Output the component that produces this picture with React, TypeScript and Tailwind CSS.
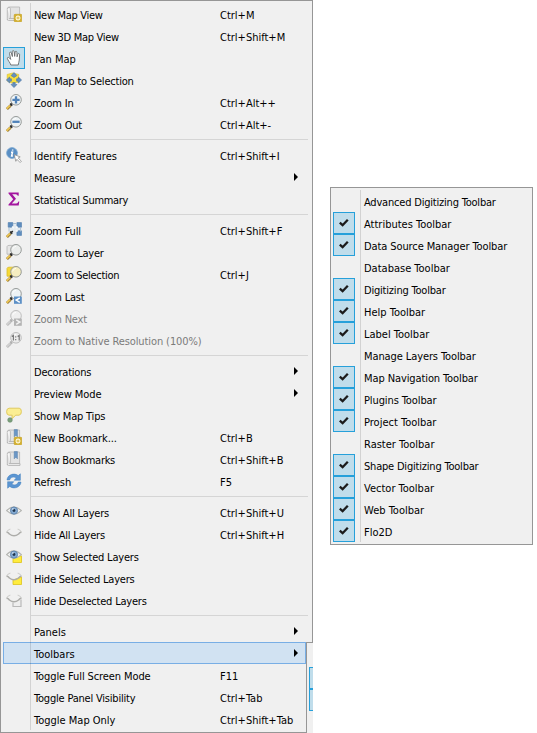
import React from "react";

type Item = { label: string; keys?: string; icon?: string; sub?: boolean; off?: boolean; active?: boolean; t?: string };

const T0 = "tracking-normal";
const T1 = "tracking-[-0.1px]";
const T2 = "tracking-[-0.2px]";
const T3 = "tracking-[-0.3px]";

const Lens = ({ fill = "#edf2f4", gray = false }: { fill?: string; gray?: boolean }) => (
  <g>
    <path d="M4.6 11.4 .9 15.1" stroke={gray ? "#bdbdbd" : "#a3853f"} strokeWidth="2.8" />
    <path d="M4 11.4 .7 14.7" stroke={gray ? "#d2d2d2" : "#f3cb52"} strokeWidth="1.4" />
    <path d="M6.6 9.2 4.4 11.4M4.2 9.6l2 2.2" stroke={gray ? "#b0b0b0" : "#2b2b2b"} strokeWidth="1.5" />
    <circle cx="10" cy="5.8" r="5.3" fill={fill} stroke={gray ? "#bdbdbd" : "#969a98"} strokeWidth="1" />
    <path d="M6.6 5.4Q7.200 2.600 10 2.300" fill="none" stroke="#fff" strokeOpacity=".8" strokeWidth="1" />
  </g>
);

const Page = ({ mark = false }: { mark?: boolean }) => (
  <g>
    <path d="M3.4 1h10.200v11.600H4.800L1.300 14V2.600Q1.600 1 3.400 1Z" fill="#e3e3e3" stroke="#b9b9b9" strokeWidth=".9" />
    <path d="M1.500 3Q1.700 1.300 3 1.300 4.400 1.300 4.400 3v9.700" fill="#f6f6f6" stroke="#b4b4b4" strokeWidth=".8" />
    <path d="M2.800 12.600H14v1.800H2.600Q1.400 14.200 1.400 13" fill="#f6f6f6" stroke="#b0b0b0" strokeWidth=".9" />
    {mark && <path d="M8.200.6h3.200v7.200L9.800 6.200 8.200 7.800Z" fill="#6b97c6" stroke="#4f7aa8" strokeWidth=".5" />}
  </g>
);

const Star = () => (
  <g>
    <rect x="8.200" y="8.300" width="7.500" height="7.400" rx=".8" fill="#d5b02e" stroke="#c39f1d" strokeWidth=".6" />
    <path d="M12 9.300v5.400M9.300 12h5.400M10.200 10.200l3.600 3.600M13.800 10.200l-3.600 3.600" stroke="#fffbe0" strokeWidth="1.100" />
    <circle cx="12" cy="12" r=".9" fill="#d5b02e" />
  </g>
);

const Eye = () => (
  <g>
    <path d="M.6 6.600Q7.600-.6 15.400 6.600 8 13.600.6 6.600Z" fill="#f6f6f4" stroke="#b4b5b2" strokeWidth="1.200" />
    <circle cx="8" cy="6.600" r="3.600" fill="#84aad2" stroke="#5c82ab" strokeWidth=".9" />
    <circle cx="8" cy="6.500" r="1.400" fill="#1e344d" />
    <circle cx="6.900" cy="5" r=".8" fill="#e7f1fa" />
  </g>
);

const Lid = () => (
  <g fill="none">
    <path d="M.8 5.800Q1.800 3.700 4.400 3M15.200 5.800Q14.200 3.700 11.600 3" stroke="#cfcfcd" strokeWidth="1.100" />
    <path d="M.5 6.200Q2.200 6.200 3.400 8 8 11.600 12.600 8 13.800 6.200 15.500 6.200" stroke="#adadaa" strokeWidth="1.500" />
  </g>
);

const glyphs: Record<string, React.ReactNode> = {
  newMap: <><Page /><Star /></>,
  hand: (
    <path d="M4.800 15C4.300 12.800 1.700 10.300 1.400 8.500 1.200 7.200 2.500 7 3.300 7.900L4.700 9.400 3.500 3.400C3.300 1.900 4.900 1.600 5.300 2.900L6.400 6.500 6.200 1.700C6.300.3 8 .3 8.200 1.700L8.700 6.400 9.100 2C9.400.8 10.900 1 10.900 2.400L11.100 6.800 11.800 4.200C12.200 3.100 13.700 3.400 13.600 4.700L13.300 10C13.200 12 12.300 13 12.200 15Z" fill="#fff" stroke="#6a6a6a" strokeWidth=".9" />
  ),
  panSel: (
    <g>
      <path d="M1.200 2.400 6.600 1l6.200 1.400-.6 7.800L5.400 11 1.200 9Z" fill="#f8df3c" stroke="#d9be2c" strokeWidth=".6" />
      <path d="M8 .6 10.900 3.600 8 5.500 5.100 3.600ZM8 15.600 5 12.400H6.800V10.600H9.200V12.400H11ZM.4 8 3.600 5V6.800H5.400V9.200H3.600V11ZM15.600 8 12.400 11V9.200H10.600V6.800H12.400V5Z" fill="#6590bf" stroke="#4c76a5" strokeWidth=".6" />
    </g>
  ),
  zoomIn: <><Lens /><path d="M10 2.200v7.200M6.400 5.800h7.200" stroke="#4f81b8" strokeWidth="2.300" /></>,
  zoomOut: <><Lens /><path d="M6.400 5.800h7.200" stroke="#4f81b8" strokeWidth="2.300" /></>,
  identify: (
    <g>
      <circle cx="6" cy="6" r="5.400" fill="#5a8fc4" stroke="#7ba7d1" strokeWidth=".8" />
      <path d="M6.700 2.500 6.500 3.700M5 5.300h1.500L5.600 9h1.300" fill="none" stroke="#fff" strokeWidth="1.500" />
      <path d="m8.200 7.600 6 2.300-2 1.100 3.200 3.200-1.300 1.300-3.200-3.200-1.100 2Z" fill="#fff" stroke="#8f8f8f" strokeWidth=".8" />
    </g>
  ),
  sigma: <path d="M2.500 1.500h10.200v3.300h-.9Q11.400 3.200 9.800 3.200H6.200L10 7.700 5.800 12.400h4.400q1.600 0 2.200-1.900h.9l-.6 3.900H2.500v-.8L7.200 8.300 2.500 2.400Z" fill="#a3169f" />,
  zoomFull: (
    <g>
      <rect x="2.500" y=".8" width="12.600" height="12.400" fill="#e4ebf0" />
      <path d="M2.200.6h4.600v3.200L5.400 5.200H2.200ZM15.500.6h-4.600v3.200l1.400 1.400h3.200ZM15.500 13.400h-4.600v-3.200l1.400-1.400h3.200Z" fill="#5f8dbe" stroke="#4f7cad" strokeWidth=".6" />
      <path d="M6.200 4.600 8 6.400M11.400 4.600 9.800 6.400M11.400 9.600 9.800 8" stroke="#f8fafc" strokeWidth="1.200" />
      <path d="M7 1.500h4M3 5.500v4M14.600 5.500v4" stroke="#a8bfd2" strokeWidth="1" />
      <path d="M4.600 11.400.9 15.100" stroke="#a3853f" strokeWidth="2.800" />
      <path d="M4 11.400.7 14.700" stroke="#f3cb52" strokeWidth="1.400" />
      <path d="M6.800 9 4.400 11.400M4.200 9.600l2 2.200" stroke="#2b2b2b" strokeWidth="1.500" />
    </g>
  ),
  zoomLayer: <><path d="M1 2.600Q1.400 1.400 3 1.400h7v8.800H1Z" fill="#e6e6e6" stroke="#b4b4b4" strokeWidth=".8" /><Lens fill="#ebedec" /></>,
  zoomSel: <><path d="M1 2.400Q1.400 1.200 3 1.200h7v9H1Z" fill="#f6d936" stroke="#d9bc2a" strokeWidth=".8" /><Lens fill="#f5edc0" /></>,
  zoomLast: <><Lens /><rect x="8" y="8.500" width="7.800" height="7.300" fill="#5c90c6" /><path d="m13.800 9.900-3.600 2.200 3.600 2.200" fill="none" stroke="#fff" strokeWidth="1.500" /></>,
  zoomNext: <><Lens gray fill="#efefef" /><rect x="8" y="8.500" width="7.800" height="7.300" fill="#b4b4b4" /><path d="m10.200 9.900 3.600 2.200-3.600 2.200" fill="none" stroke="#f4f4f4" strokeWidth="1.500" /></>,
  native: <><Lens gray fill="#ececec" /><path d="M5.800 4.400 7.400 3.400v5M11.600 4.400l1.600-1v5M9.700 4.200v1.300M9.700 7v1.300" fill="none" stroke="#7a7a7a" strokeWidth="1.200" /></>,
  tips: (
    <g>
      <path d="M3 1.200h10.200Q15.400 1.400 15.400 4.600T13 8.200H9.800L5.800 11.800 6.200 8.200H3Q.6 8 .6 4.700T3 1.200Z" fill="#fbee92" stroke="#dcc557" strokeWidth=".9" />
      <circle cx="4" cy="13" r="2.300" fill="#7ba07b" stroke="#648a68" strokeWidth=".6" />
    </g>
  ),
  newBook: <><Page mark /><Star /></>,
  book: <Page mark />,
  refresh: (
    <g fill="#5b95d2" stroke="#4380be" strokeWidth=".5">
      <path d="M1 7C1.300 1.800 8-.8 12.200 2.600L14.400.8V7.300H8.200L10.200 5C7.600 3.200 4.500 4.300 3.700 7Z" />
      <path d="M15 9C14.700 14.200 8 16.800 3.800 13.400L1.600 15.200V8.700H7.800L5.800 11C8.400 12.800 11.500 11.700 12.300 9Z" />
    </g>
  ),
  eye: <Eye />,
  lid: <Lid />,
  eyeSel: <><rect x="7" y="8" width="8.500" height="6.500" fill="#ffec3d" stroke="#dcc31d" strokeWidth=".8" /><Eye /></>,
  lidSel: <><path d="M15.500 7v7.500H7V10Z" fill="#ffec3d" stroke="#dcc31d" strokeWidth=".8" /><Lid /></>,
  lidDes: <><path d="M15 7.500v7H7V10.500" fill="#eee" stroke="#b9b9b9" strokeWidth="1.200" /><Lid /></>,
};

const groups: Item[][] = [
  [
    { label: "New Map View", keys: "Ctrl+M", icon: "newMap", t: T3 },
    { label: "New 3D Map View", keys: "Ctrl+Shift+M", t: T3 },
    { label: "Pan Map", icon: "hand", t: T0 },
    { label: "Pan Map to Selection", icon: "panSel" },
    { label: "Zoom In", keys: "Ctrl+Alt++", icon: "zoomIn" },
    { label: "Zoom Out", keys: "Ctrl+Alt+-", icon: "zoomOut" },
  ],
  [
    { label: "Identify Features", keys: "Ctrl+Shift+I", icon: "identify", t: T0 },
    { label: "Measure", sub: true, t: T1 },
    { label: "Statistical Summary", icon: "sigma", t: T3 },
  ],
  [
    { label: "Zoom Full", keys: "Ctrl+Shift+F", icon: "zoomFull" },
    { label: "Zoom to Layer", icon: "zoomLayer" },
    { label: "Zoom to Selection", keys: "Ctrl+J", icon: "zoomSel", t: T3 },
    { label: "Zoom Last", icon: "zoomLast" },
    { label: "Zoom Next", icon: "zoomNext", off: true },
    { label: "Zoom to Native Resolution (100%)", icon: "native", off: true, t: T1 },
  ],
  [
    { label: "Decorations", sub: true },
    { label: "Preview Mode", sub: true, t: T1 },
    { label: "Show Map Tips", icon: "tips" },
    { label: "New Bookmark...", keys: "Ctrl+B", icon: "newBook", t: T1 },
    { label: "Show Bookmarks", keys: "Ctrl+Shift+B", icon: "book", t: T3 },
    { label: "Refresh", keys: "F5", icon: "refresh", t: T0 },
  ],
  [
    { label: "Show All Layers", keys: "Ctrl+Shift+U", icon: "eye" },
    { label: "Hide All Layers", keys: "Ctrl+Shift+H", icon: "lid" },
    { label: "Show Selected Layers", icon: "eyeSel" },
    { label: "Hide Selected Layers", icon: "lidSel" },
    { label: "Hide Deselected Layers", icon: "lidDes" },
  ],
];

const tail: Item[] = [
  { label: "Toolbars", sub: true, active: true, t: T0 },
  { label: "Toggle Full Screen Mode", keys: "F11", t: T1 },
  { label: "Toggle Panel Visibility", keys: "Ctrl+Tab" },
  { label: "Toggle Map Only", keys: "Ctrl+Shift+Tab", t: T0 },
];

const toolbars: [string, boolean, string][] = [
  ["Advanced Digitizing Toolbar", false, T2],
  ["Attributes Toolbar", true, T0],
  ["Data Source Manager Toolbar", true, T1],
  ["Database Toolbar", false, T0],
  ["Digitizing Toolbar", true, T2],
  ["Help Toolbar", true, T0],
  ["Label Toolbar", true, T0],
  ["Manage Layers Toolbar", false, T1],
  ["Map Navigation Toolbar", true, T1],
  ["Plugins Toolbar", true, T1],
  ["Project Toolbar", true, T0],
  ["Raster Toolbar", false, T0],
  ["Shape Digitizing Toolbar", true, T2],
  ["Vector Toolbar", true, T0],
  ["Web Toolbar", true, T0],
  ["Flo2D", true, T0],
];

const tile = "border border-[#26a0da] bg-[#c0ddeb]";

function Row({ item }: { item: Item }) {
  return (
    <div className={`flex h-[22px] items-center ${item.off ? "text-[#7b7b7b]" : "text-black"} ${item.active ? "bg-[#d1e2f2] outline outline-1 -outline-offset-1 outline-[#78aee5]" : ""}`}>
      <div className={`flex size-[22px] shrink-0 items-center justify-center ${item.icon === "hand" ? tile : ""}`}>
        {item.icon && (
          <svg viewBox="0 0 16 16" className="size-4 shrink-0">{glyphs[item.icon]}</svg>
        )}
      </div>
      <span className={`ml-[9px] w-[186px] shrink-0 pt-1 ${item.t ?? T2}`}>{item.label}</span>
      {item.keys && <span className="pt-1">{item.keys}</span>}
      {item.sub && (
        <svg viewBox="0 0 4 8" className="ml-[74px] h-2 w-1 shrink-0"><path d="M0 0 4 4 0 8Z" fill="#000" /></svg>
      )}
    </div>
  );
}

const Separator = () => <div className="mr-1 ml-7 h-[9px] pt-1"><div className="h-px bg-[#d5d5d5]" /></div>;

export default function App() {
  return (
    <div className="flex h-[733px] w-[537px] items-start bg-white font-['DejaVu_Sans_Condensed','DejaVu_Sans',sans-serif] text-[11px] leading-[14px] font-stretch-condensed whitespace-nowrap">
      <div className="relative w-[313px]">
        <div className="h-[642px] border-t border-r border-l border-[#969696] bg-[#f0f0f0] pt-[2px] pl-[2px]">
          {groups.map((g, i) => (
            <div key={i}>
              {g.map((it) => <Row key={it.label} item={it} />)}
              <Separator />
            </div>
          ))}
          <Row item={{ label: "Panels", sub: true, t: T0 }} />
        </div>
        <div className="flex h-[91px]">
          <div className="w-[307px] border-r border-b border-l border-[#969696] bg-[#f0f0f0] pl-[2px]">
            {tail.map((it) => <Row key={it.label} item={it} />)}
          </div>
          <div className="w-[6px] border-t border-[#969696] bg-[#f0f0f0] pt-6 pl-[2px]">
            <div className="h-[22px] border-y border-l border-[#26a0da] bg-[#c0ddeb]" />
            <div className="h-[22px] border-y border-l border-[#26a0da] bg-[#c0ddeb]" />
          </div>
        </div>
        <div className="absolute top-[3px] left-[30px] h-[727px] w-px bg-black/12" />
      </div>
      <div className="relative mt-[187px] ml-[17px] h-[358px] w-[203px] border border-[#969696] bg-[#f0f0f0] pt-[2px] pl-[2px]">
        {toolbars.map(([name, on, t]) => (
          <div key={name} className="flex h-[22px] items-center">
            <div className={`size-[22px] shrink-0 ${on ? tile : ""}`}>
              {on && (
                <svg viewBox="0 0 20 20" className="size-5"><path d="M5.800 9.700 8.600 12.200 13.800 6.700" fill="none" stroke="#1c1c1c" strokeWidth="2.300" /></svg>
              )}
            </div>
            <span className={`ml-[9px] pt-1 ${t}`}>{name}</span>
          </div>
        ))}
        <div className="absolute top-[2px] left-[29px] h-[352px] w-px bg-black/12" />
      </div>
    </div>
  );
}
